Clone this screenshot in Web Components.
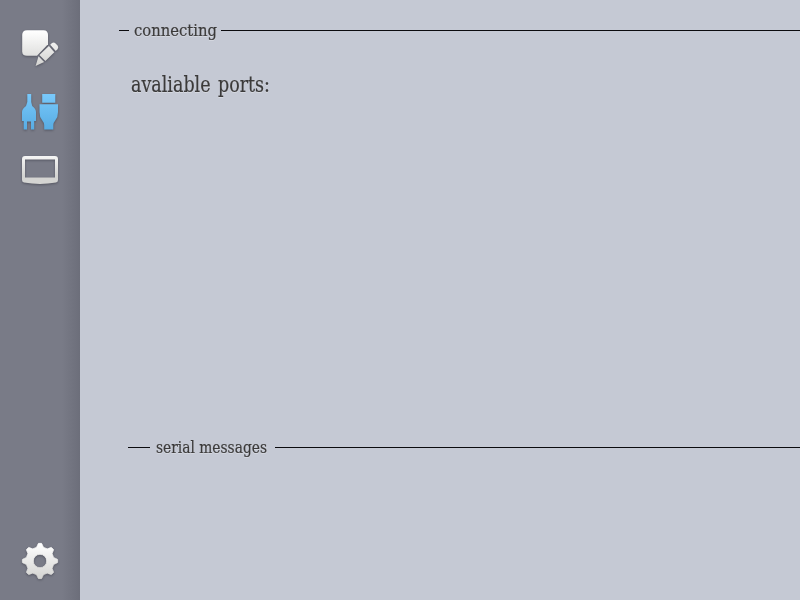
<!DOCTYPE html>
<html lang="en"><head><meta charset="utf-8"><title>Connecting</title>
<style>html,body{margin:0;height:100%;overflow:hidden}</style></head>
<body>
<app-shell>
  <side-bar slot="nav">
    <nav-icon name="edit"></nav-icon>
    <nav-icon name="plug"></nav-icon>
    <nav-icon name="screen"></nav-icon>
    <nav-icon name="gear" slot="end"></nav-icon>
  </side-bar>
  <section-panel style="--indent:39px;--lead:10px;--before:5px;--after:4px;height:417px">
    <fit-label slot="title" size="17.5" width="83">connecting</fit-label>
    <fit-label size="21.5" width="139">avaliable ports:</fit-label>
  </section-panel>
  <section-panel style="--indent:48px;--lead:22px;--before:6px;--after:8px">
    <fit-label slot="title" size="17.5" width="111">serial messages</fit-label>
  </section-panel>
</app-shell>
<script>
const define = (name, render) => customElements.define(name, class extends HTMLElement {
  connectedCallback() {
    if (!this.shadowRoot) this.attachShadow({mode: 'open'}).innerHTML = render(this);
  }
});

define('app-shell', () => `<style>
  :host{display:flex;width:100%;height:100vh;background:#c5c9d4;color:#3b3a3a}
  main{flex:1;min-width:0;box-sizing:border-box;padding-top:20px}
</style><slot name="nav"></slot><main><slot></slot></main>`);

define('side-bar', () => `<style>
  :host{display:flex;flex-direction:column;justify-content:space-between;align-items:center;flex:none;
    width:80px;box-sizing:border-box;padding:28px 0 19px;
    background:linear-gradient(90deg,#797b87 0,#797b87 62px,#6c6e7a 80px)}
  nav{display:flex;flex-direction:column;gap:24px}
</style><nav><slot></slot></nav><slot name="end"></slot>`);

/* Single-line label with its glyphs condensed to a set width. */
define('fit-label', el => {
  const size = +el.getAttribute('size'), w = el.getAttribute('width'), h = Math.floor(size) + 6;
  return `<style>
  :host{display:block;flex:none;width:${w}px;height:${h}px}
  svg{display:block;overflow:visible;filter:drop-shadow(0 1px 0 rgba(255,255,255,.3))}
  text{font-family:"DejaVu Serif Condensed","DejaVu Serif",serif;font-stretch:condensed;font-size:${size}px;word-spacing:${size > 20 ? 2 : 0}px;fill:currentColor;stroke:currentColor;stroke-width:.2px}
</style><svg width="${w}" height="${h}"><text x="0" y="${size > 20 ? 20.5 : 16}" textLength="${w}" lengthAdjust="spacingAndGlyphs">${el.textContent}</text></svg>`;
});

define('section-panel', () => `<style>
  :host{display:block}
  header{display:flex;height:21px;align-items:flex-start;padding-left:var(--indent)}
  i{height:1px;background:#0b0b0e;margin-top:10px}
  .lead{flex:none;width:var(--lead);margin-right:var(--before)}
  .rest{flex:1;margin-left:var(--after)}
  .body{padding:30px 0 0 51px}
</style><header><i class="lead"></i><slot name="title"></slot><i class="rest"></i></header><div class="body"><slot></slot></div>`);

const gear = (() => {
  let d = '';
  for (let k = 0; k < 8; k++) {
    [[-19, 14], [-13, 14.3], [-9, 16], [-5, 17.7], [5, 17.7], [9, 16], [13, 14.3], [19, 14]].forEach(([a, r], j) => {
      const t = (k * 45 + a) * Math.PI / 180;
      d += (k || j ? 'L' : 'M') + (20 + r * Math.sin(t)).toFixed(2) + ' ' + (20 - r * Math.cos(t)).toFixed(2);
    });
  }
  return d + 'Z';
})();

const icons = {
  edit: `<path d="M7 2.300H23.500Q28 2.300 28 7V16.200L17 27.800H7Q2.200 27.800 2.200 23.500V7Q2.200 2.300 7 2.300Z"/>
    <path d="M30.200 16.700L32 15.100Q33.800 14 35.600 15.400L37.600 17.600Q38.900 19.400 37.600 21.200L35.700 23.100ZM28.900 17.900L34.300 24.300L25.400 33L19.400 27ZM18.500 28.200L24.100 34.100L15.600 38Z"/>`,
  plug: `<path d="M7.300 2H11.200V10L12.200 14Q16 17 16 20V29H14.200V37.600H11V29.500H7V37.600H3.700V29H2V20Q2 17 6 14L7.300 10Z"/>
    <path d="M22.200 2H35.300V10.800H22.200ZM19.500 12.200H38V20Q38 25 35.500 28Q33.500 30.500 33.300 33V37.400H24.200V33Q24 30.500 22 28Q19.500 25 19.500 20Z"/>`,
  screen: `<path fill-rule="evenodd" transform="translate(0 -8.500)" d="M5 8.500H35Q38 8.500 38 11.500V32.500Q38 34.600 36 35Q20 37.800 4 35Q2 34.600 2 32.500V11.500Q2 8.500 5 8.500ZM5 12V30H35V12Z"/>`,
  gear: `<path fill-rule="evenodd" stroke="url(#g)" stroke-width=".8" stroke-linejoin="round" d="${gear}M20 13.300A6.700 6.700 0 1 0 20 26.700A6.700 6.700 0 1 0 20 13.300Z"/>`
};

define('nav-icon', el => {
  const name = el.getAttribute('name'), on = name === 'plug', end = name === 'screen' ? 28 : 37;
  return `<style>
  :host{display:block;width:40px;height:40px}
  svg{display:block;overflow:visible;filter:drop-shadow(0 1px 1px rgba(40,40,50,.45))}
</style><svg width="40" height="40" viewBox="0 0 40 40"><defs><linearGradient id="g" gradientUnits="userSpaceOnUse" x1="0" y1="3" x2="0" y2="${end}">
<stop stop-color="${on ? '#78c8fa' : '#fff'}"/><stop offset="1" stop-color="${on ? '#58ade4' : '#d4d4d2'}"/></linearGradient></defs><g fill="url(#g)">${icons[name]}</g></svg>`;
});
</script>
</body></html>
